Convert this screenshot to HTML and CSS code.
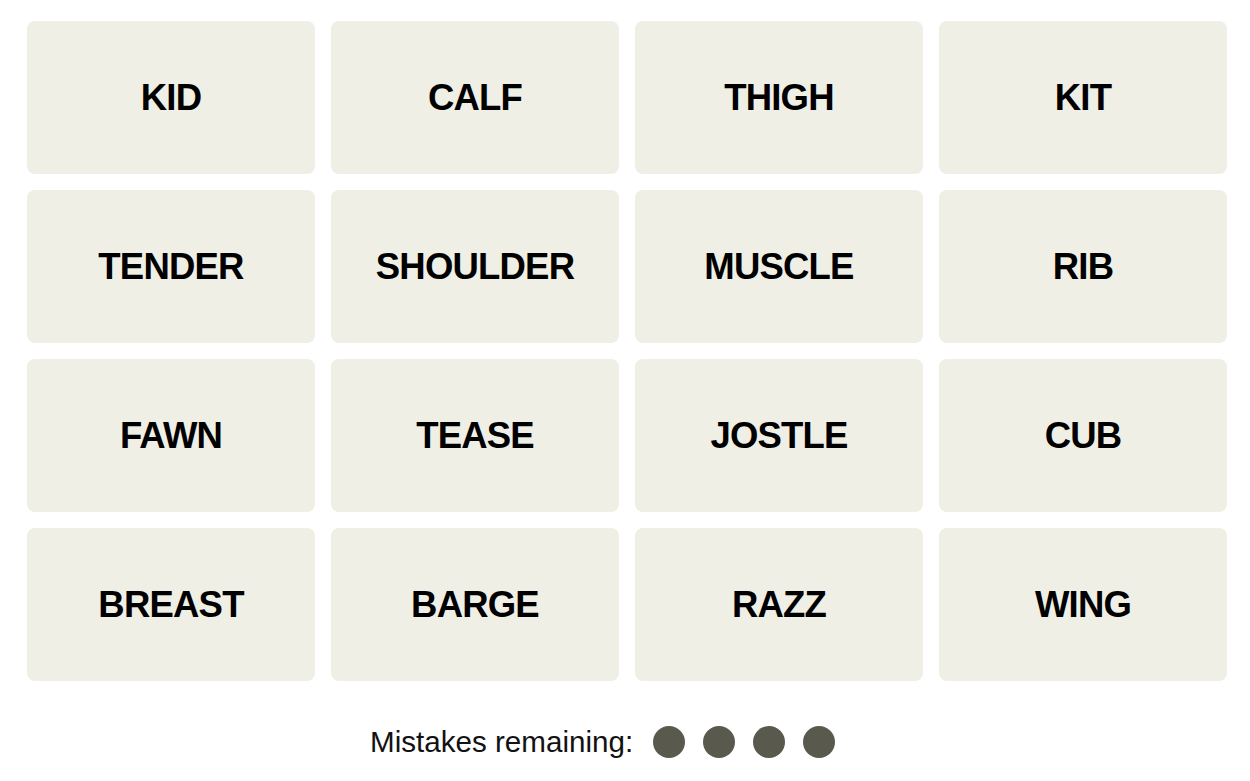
FILE: index.html
```html
<!DOCTYPE html>
<html>
<head>
<meta charset="utf-8">
<link rel="stylesheet" href="styles.css">
</head>
<body>
<div class="page">
  <div class="grid">
    <div class="tile">KID</div>
    <div class="tile">CALF</div>
    <div class="tile">THIGH</div>
    <div class="tile">KIT</div>
    <div class="tile">TENDER</div>
    <div class="tile">SHOULDER</div>
    <div class="tile">MUSCLE</div>
    <div class="tile">RIB</div>
    <div class="tile">FAWN</div>
    <div class="tile">TEASE</div>
    <div class="tile">JOSTLE</div>
    <div class="tile">CUB</div>
    <div class="tile">BREAST</div>
    <div class="tile">BARGE</div>
    <div class="tile">RAZZ</div>
    <div class="tile">WING</div>
  </div>
  <div class="mistakes">
    <span class="label">Mistakes remaining:</span>
    <span class="dots">
      <span class="dot"></span>
      <span class="dot"></span>
      <span class="dot"></span>
      <span class="dot"></span>
    </span>
  </div>
</div>
</body>
</html>
```
FILE: styles.css
```css
html, body {
  margin: 0;
  padding: 0;
  background: #ffffff;
}
.page {
  width: 1250px;
  height: 781px;
  padding: 21px 0 0 27px;
  box-sizing: border-box;
  font-family: "Liberation Sans", Arial, sans-serif;
  color: #000;
}
.grid {
  display: grid;
  grid-template-columns: repeat(4, 288px);
  grid-auto-rows: 153px;
  gap: 16px;
}
.tile {
  background: #efefe6;
  border-radius: 8px;
  display: flex;
  align-items: center;
  justify-content: center;
  font-weight: 700;
  font-size: 36.5px;
  letter-spacing: -0.8px;
}
.mistakes {
  display: flex;
  align-items: center;
  padding-left: 343px;
  margin-top: 45px;
  height: 32px;
}
.label {
  font-size: 29.6px;
  color: #121212;
}
.dots {
  display: flex;
  gap: 18px;
  margin-left: 20px;
}
.dot {
  width: 32px;
  height: 32px;
  border-radius: 50%;
  background: #5a594e;
}
```
